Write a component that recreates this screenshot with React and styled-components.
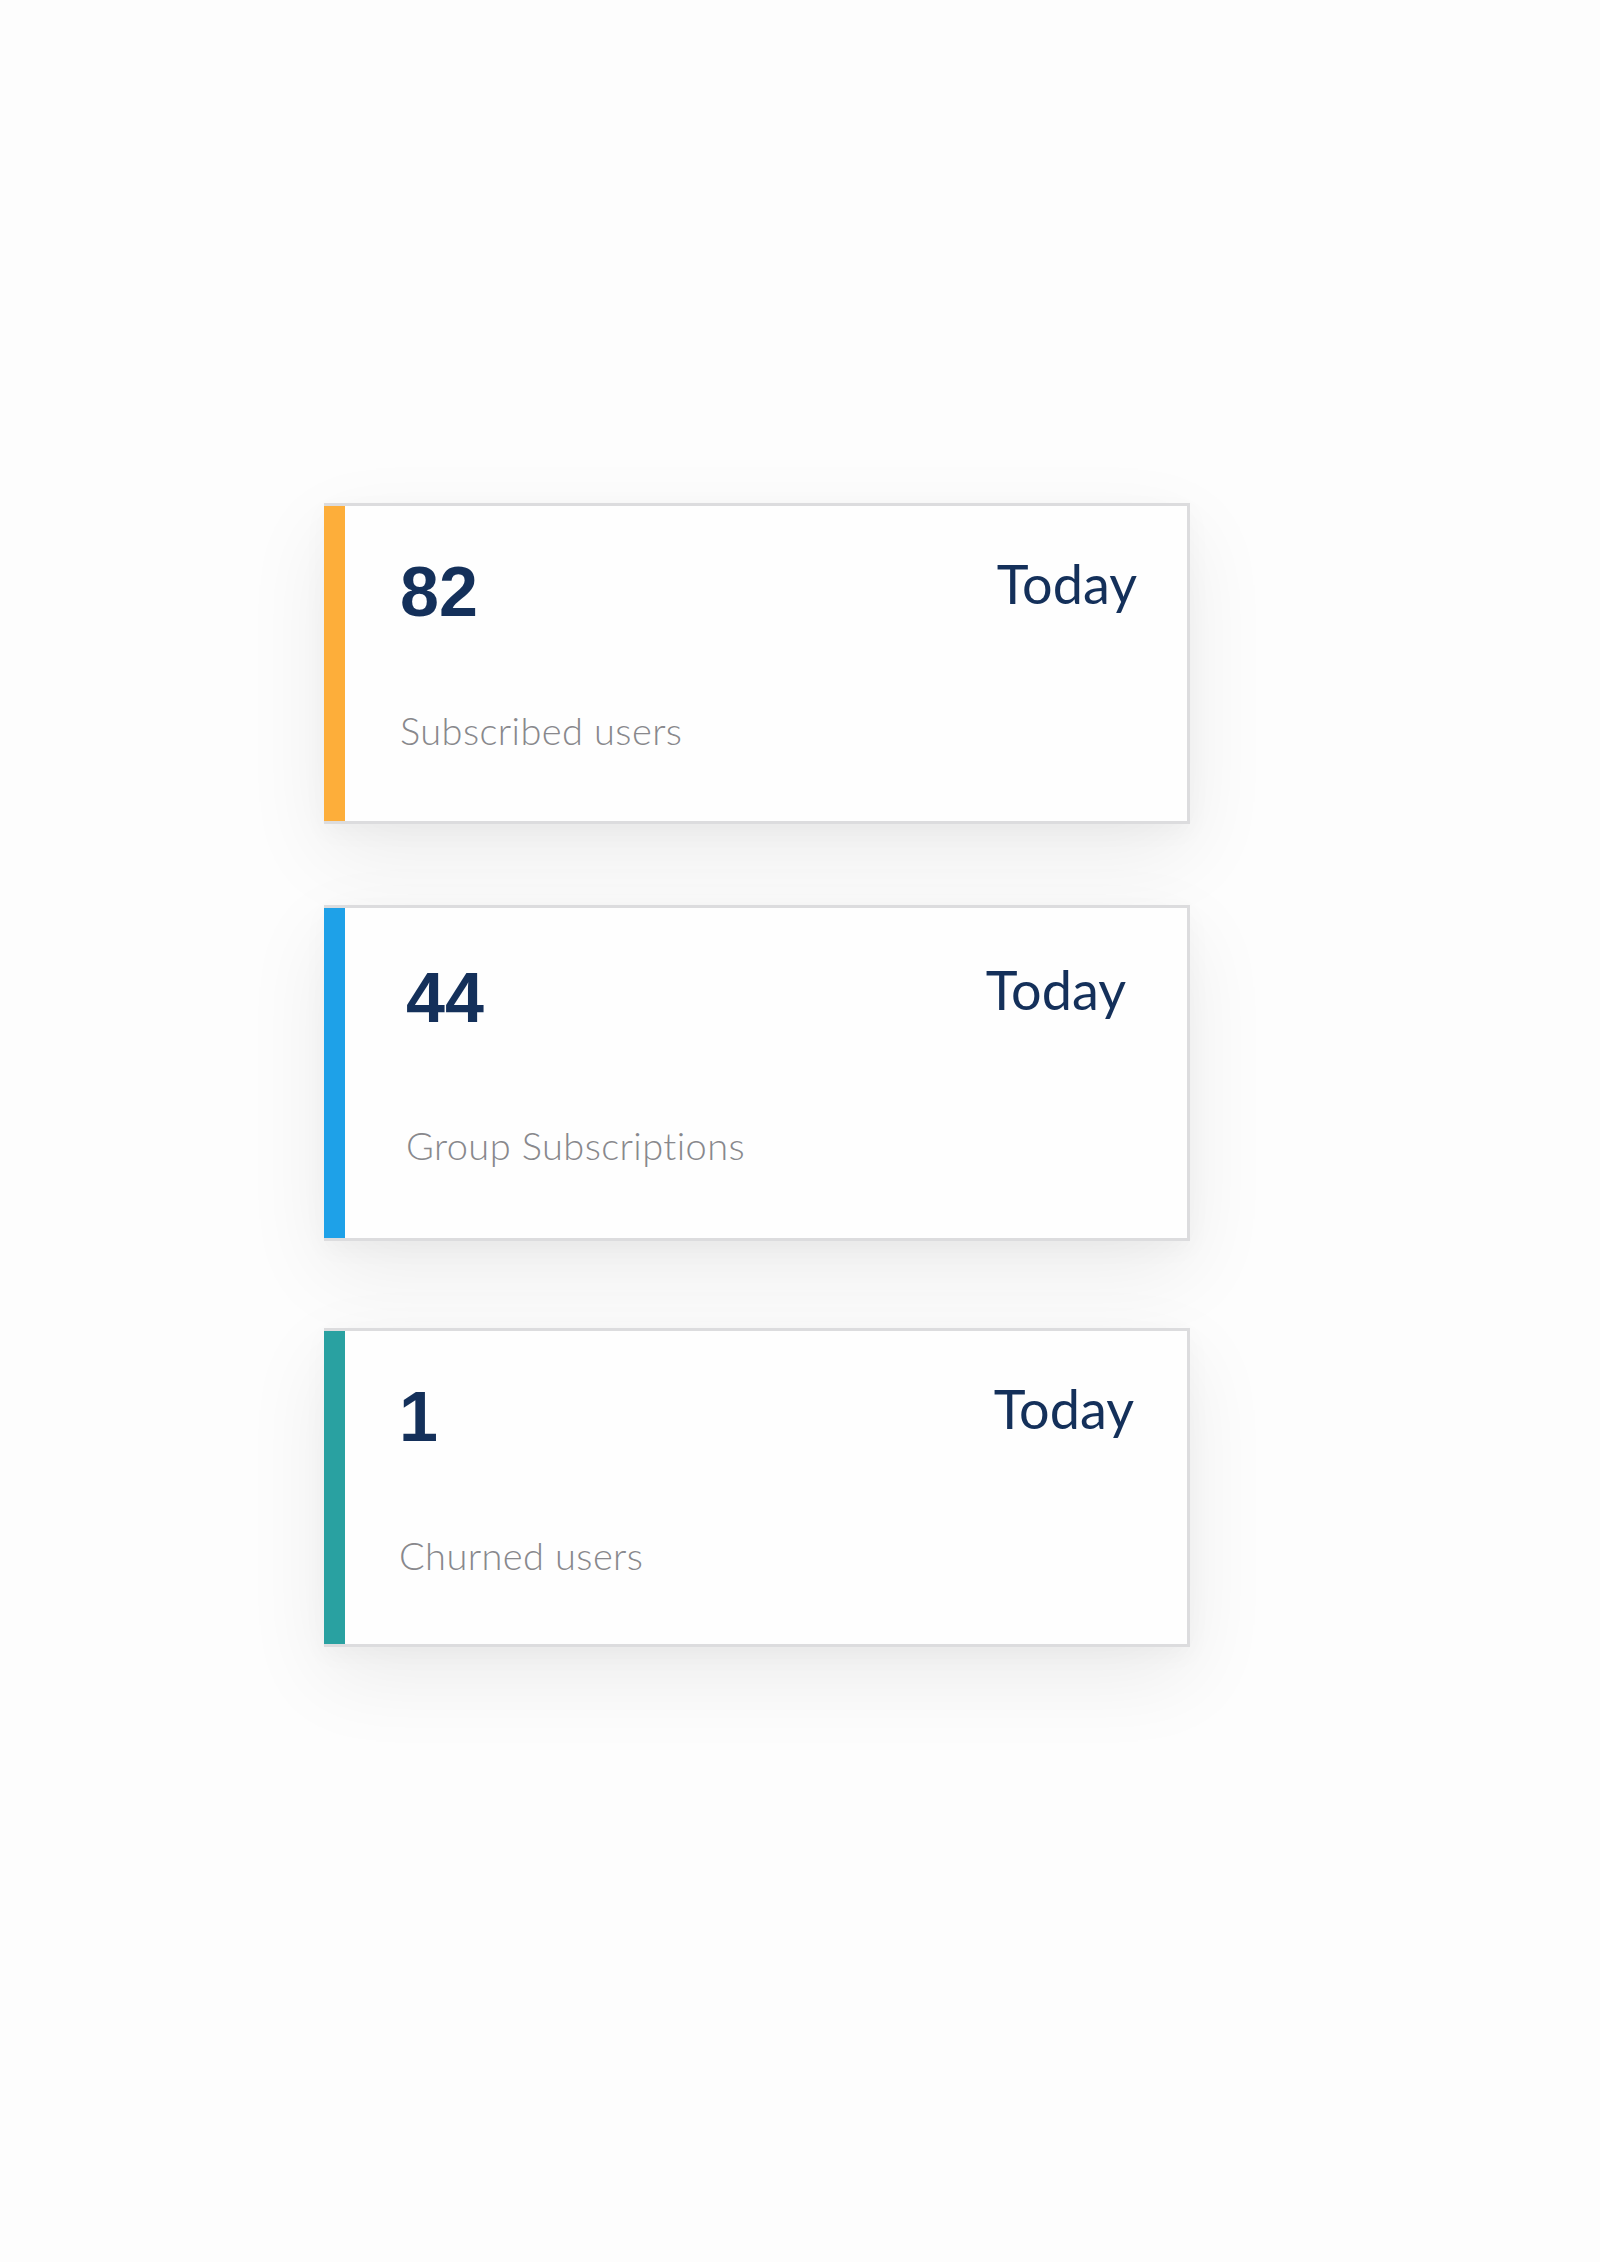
import React from 'react';
import styled, { createGlobalStyle } from 'styled-components';

const GlobalStyle = createGlobalStyle`
  html, body {
    margin: 0;
    padding: 0;
    background: #fdfdfd;
  }
`;

const Page = styled.div`
  min-height: 2262px;
  padding: 503px 0 0 324px;
  box-sizing: border-box;
`;

const CardList = styled.div`
  display: flex;
  flex-direction: column;
  width: 866px;
`;

const Card = styled.div`
  display: flex;
  box-sizing: border-box;
  height: ${p => p.$height}px;
  margin-top: ${p => p.$offset}px;
  background: #fefefe;
  border: 3px solid #dcdcde;
  border-left: 0;
  box-shadow: 0 30px 80px rgba(0, 0, 0, 0.07), 0 8px 24px rgba(0, 0, 0, 0.03);
`;

const Accent = styled.div`
  flex: 0 0 21px;
  background: ${p => p.$color};
`;

const Body = styled.div`
  flex: 1;
  display: flex;
  flex-direction: column;
  padding: ${p => p.$pt}px ${p => p.$pr}px 0 ${p => p.$pl}px;
`;

const TopRow = styled.div`
  display: flex;
  justify-content: space-between;
  align-items: flex-start;
`;

const Count = styled.div`
  font-family: "Liberation Sans", Arial, sans-serif;
  font-weight: 700;
  font-size: 70px;
  line-height: 1;
  color: #14305a;
`;

const Period = styled.div`
  font-family: Lato, "Noto Sans", sans-serif;
  font-weight: 400;
  font-size: 54px;
  line-height: 1;
  color: #14305a;
`;

const Label = styled.div`
  margin-top: ${p => p.$gap}px;
  font-family: Lato, "Noto Sans", sans-serif;
  font-weight: 300;
  font-size: 38px;
  letter-spacing: 0.4px;
  line-height: 1;
  color: #88888c;
`;

const stats = [
  { value: '82', label: 'Subscribed users', accent: '#fdae3a', height: 321, offset: 0, pt: 51, pr: 50, pl: 55, gap: 84 },
  { value: '44', label: 'Group Subscriptions', accent: '#1ea1e8', height: 336, offset: 81, pt: 55, pr: 61, pl: 61, gap: 93 },
  { value: '1', label: 'Churned users', accent: '#29a1a1', height: 319, offset: 87, pt: 51, pr: 53, pl: 54, gap: 84 },
];

const App = () =>
  <Page>
    <GlobalStyle />
    <CardList>
      {stats.map(s =>
        <Card key={s.label} $height={s.height} $offset={s.offset}>
          <Accent $color={s.accent} />
          <Body $pt={s.pt} $pr={s.pr} $pl={s.pl}>
            <TopRow>
              <Count>{s.value}</Count>
              <Period>Today</Period>
            </TopRow>
            <Label $gap={s.gap}>{s.label}</Label>
          </Body>
        </Card>
      )}
    </CardList>
  </Page>;

export default App;
